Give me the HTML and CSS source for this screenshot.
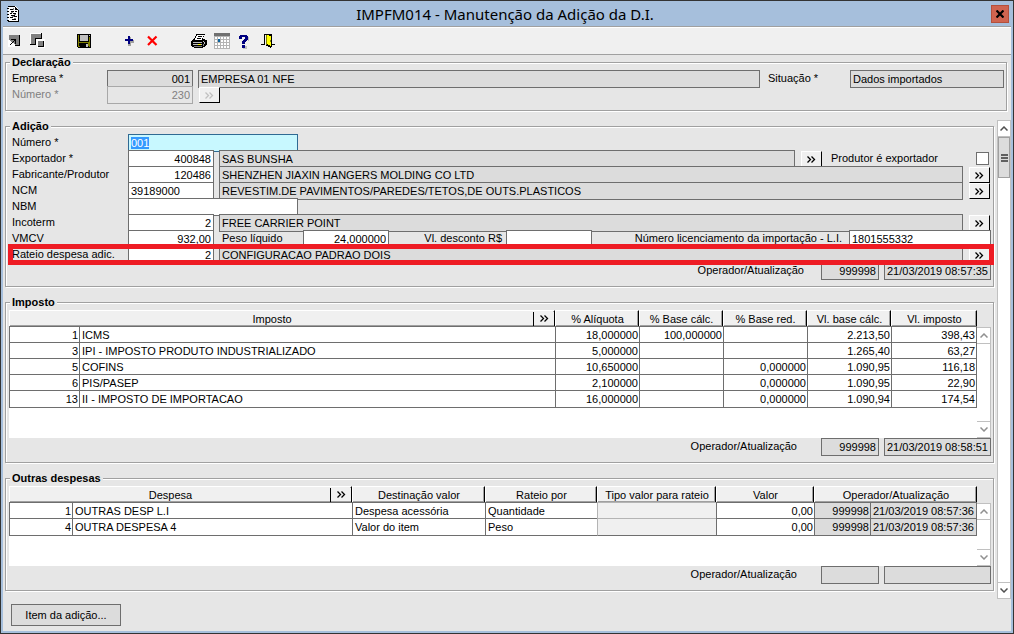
FILE: index.html
```html
<!DOCTYPE html>
<html lang="pt-BR">
<head>
    <meta charset="UTF-8">
    <meta name="viewport" content="width=device-width, initial-scale=1.0">
    <title>IMPFM014 - Manutenção da Adição da D.I.</title>
    <link rel="stylesheet" href="styles.css">
</head>
<body>

<svg class="symbols" aria-hidden="true">
    <symbol id="more" viewBox="0 0 9 7">
        <path d="M0.5 0.5L3.5 3.5L0.5 6.5M4.5 0.5L7.5 3.5L4.5 6.5" fill="none" stroke="currentColor" stroke-width="1.3"/>
    </symbol>
    <symbol id="up" viewBox="0 0 8 5">
        <path d="M0.5 4.5L4 1L7.5 4.5" fill="none" stroke="currentColor" stroke-width="1.5"/>
    </symbol>
    <symbol id="down" viewBox="0 0 8 5">
        <path d="M0.5 0.5L4 4L7.5 0.5" fill="none" stroke="currentColor" stroke-width="1.5"/>
    </symbol>
</svg>

<div class="window">
    <header class="titlebar">
        <svg class="app-icon" width="12" height="16" viewBox="0 0 12 16" shape-rendering="crispEdges">
            <path fill="#fff" d="M1 0h7l3 3v12h-10z"/>
            <path fill="#000" d="M1 0h7v1h-7zM8 1h1v1h1v1h1v1h1v12h-11v-1h10v-11h-3v-3zM0 2h2v1h-2zM0 5h2v1h-2zM0 8h2v1h-2zM0 11h2v1h-2zM0 14h2v1h-2zM3 3h3v1h-3zM4 5h3v1h-3zM8 5h2v1h-2zM3 7h2v1h-2zM6 7h3v1h-3zM4 9h4v1h-4zM7 10h3v1h-3zM3 11h3v1h-3zM5 13h4v1h-4z"/>
            <path fill="#808080" d="M6 2h1v2h-1zM4 6h2v1h-2zM7 8h2v1h-2zM5 10h2v1h-2zM7 12h2v1h-2z"/>
        </svg>
        <h1>IMPFM014 - Manutenção da Adição da D.I.</h1>
        <button class="close" aria-label="Fechar">
            <svg width="8" height="8" viewBox="0 0 8 8"><path d="M0.5 0.5L7.5 7.5M7.5 0.5L0.5 7.5" stroke="#000" stroke-width="2.2"/></svg>
        </button>
    </header>

    <nav class="toolbar">
        <button aria-label="Selecionar">
            <svg width="16" height="16" viewBox="0 0 16 16" shape-rendering="crispEdges">
                <path fill="#808080" d="M2 2h10v10h-10z"/>
                <path fill="#000" d="M12 2h1v11h-1zM8 12h5v1h-5z"/>
                <path fill="#fff" d="M1 7h2v1h1v1h1v1h2v1h1v3h-7z"/>
                <path fill="#000" d="M4 6h5v5h-1v-3h-1v1h-1v1h-1v1h-1v1h-1v-1h1v-1h1v-1h1v-1h1v-1h-3z"/>
            </svg>
        </button>
        <button aria-label="Alternar">
            <svg width="16" height="16" viewBox="0 0 16 16" shape-rendering="crispEdges">
                <path fill="#fff" d="M0 0h12v12h-12zM7 6h8v9h-8z"/>
                <path fill="#808080" d="M1 1h10v4h-5v6h-5zM8 8h5v5h-5z"/>
                <path fill="#000" d="M11 0h1v6h-1zM5 5h7v1h-7zM5 5h1v7h-1zM0 11h6v1h-6zM13 8h1v6h-1zM8 13h6v1h-6z"/>
            </svg>
        </button>
        <span class="space"></span>
        <button aria-label="Salvar">
            <svg width="16" height="16" viewBox="0 0 16 16" shape-rendering="crispEdges">
                <path fill="#000" d="M1 1h14v14h-13v-1h-1z"/>
                <path fill="#808000" d="M2 2h1v11h1v1h-2zM13 4h1v10h-1v-1h-1v-4h1zM3 9h10v1h-10z"/>
                <path fill="#c0c0c0" d="M4 2h8v6h-8zM13 2h1v1h-1zM10 11h2v3h-2z"/>
            </svg>
        </button>
        <span class="space"></span>
        <button aria-label="Incluir">
            <svg width="16" height="16" viewBox="0 0 16 16" shape-rendering="crispEdges">
                <path fill="#a0a0a0" d="M6 4h3v3h3v3h-3v3h-3z"/>
                <path fill="#000080" d="M6 3h2v3h3v2h-3v3h-2v-3h-3v-2h3z"/>
            </svg>
        </button>
        <button aria-label="Excluir">
            <svg width="16" height="16" viewBox="0 0 16 16"><path d="M3 3.5L11.5 12M11.5 3.5L3 12" stroke="#f00" stroke-width="2.2"/></svg>
        </button>
        <span class="space"></span>
        <button aria-label="Imprimir">
            <svg width="16" height="16" viewBox="0 0 16 16" shape-rendering="crispEdges">
                <path fill="#000" d="M5 1h9v1h-1v2h-1v2h2v1h2v5h-1v1h-1v1h-2v1h-9v-1h-2v-1h-1v-5h1v-1h1v-1h1v-1h1v-2h1z"/>
                <path fill="#fff" d="M6 2h7v1h-1v2h-1v2h-7v-2h1v-2h1z"/>
                <path fill="#000" d="M7 3h4v1h-4zM6 5h4v1h-4z"/>
                <path fill="#c0c0c0" d="M2 9h9v1h-9zM2 11h9v1h-9zM12 8h1v1h-1zM13 9h1v2h-1z"/>
                <path fill="#808080" d="M3 13h8v1h-8zM12 11h1v2h-1z"/>
                <path fill="#ff0" d="M7 11h3v1h-3z"/>
            </svg>
        </button>
        <button aria-label="Calendário">
            <svg width="16" height="16" viewBox="0 0 16 16" shape-rendering="crispEdges">
                <path fill="#b4b4b4" d="M0 3h16v13h-16z"/>
                <path fill="#707070" d="M0 0h16v3h-16z"/>
                <path fill="#fff" d="M1 4h2v2h-2zM4 4h2v2h-2zM7 4h2v2h-2zM10 4h2v2h-2zM13 4h2v2h-2zM1 7h2v2h-2zM7 7h2v2h-2zM10 7h2v2h-2zM13 7h2v2h-2zM1 10h2v2h-2zM4 10h2v2h-2zM7 10h2v2h-2zM10 10h2v2h-2zM13 10h2v2h-2zM1 13h2v2h-2zM4 13h2v2h-2zM7 13h2v2h-2zM10 13h2v2h-2zM13 13h2v2h-2z"/>
                <path fill="#0a64a0" d="M4 6h2v3h-2z"/>
            </svg>
        </button>
        <button aria-label="Ajuda">
            <svg width="16" height="16" viewBox="0 0 16 16" shape-rendering="crispEdges">
                <path fill="#c0c0c0" d="M6 13h4v3h-4zM11 4h1v4h-1z"/>
                <path fill="#000080" d="M3 2h7v1h1v4h-1v1h-1v1h-1v2h-3v-3h1v-1h1v-1h1v-2h-3v2h-3v-3h1zM5 12h3v3h-3z"/>
            </svg>
        </button>
        <button aria-label="Sair">
            <svg width="16" height="16" viewBox="0 0 16 16" shape-rendering="crispEdges">
                <path fill="#000" d="M4 1h8v10h3v1h-3v2h-1v1h-1v-1h-2v-1h-2v-11h-1v10h-4v-1h3z"/>
                <path fill="#ff0" d="M7 2h2v1h2v10h-1v-1h-2v-1h-1z"/>
                <path fill="#808000" d="M6 2h1v10h-1zM10 7h1v2h-1z"/>
            </svg>
        </button>
    </nav>

    <main class="content">
        <fieldset>
            <legend>Declaração</legend>
            <div class="row declaration">
                <label for="empresa">Empresa *</label>
                <input class="short num" id="empresa" value="001" readonly>
                <input class="desc" aria-label="Nome da empresa" value="EMPRESA 01 NFE" readonly>
                <label class="status-label" for="situacao">Situação *</label>
                <input class="status" id="situacao" value="Dados importados" readonly>
            </div>
            <div class="row declaration disabled">
                <label for="numero-di">Número *</label>
                <input class="short num" id="numero-di" value="230" disabled>
                <button class="more" aria-label="Buscar" disabled><svg width="9" height="7"><use href="#more"/></svg></button>
            </div>
        </fieldset>

        <div class="scroll-area">
            <div class="sections">
                <fieldset>
                    <legend>Adição</legend>
                    <div class="row">
                        <label for="numero">Número *</label>
                        <input class="medium active" id="numero" value="001">
                    </div>
                    <div class="row">
                        <label for="exportador">Exportador *</label>
                        <input class="short num" id="exportador" value="400848">
                        <input class="desc" aria-label="Nome do exportador" value="SAS BUNSHA" readonly>
                        <button class="more" aria-label="Buscar"><svg width="9" height="7"><use href="#more"/></svg></button>
                        <label class="check">Produtor é exportador <input type="checkbox"></label>
                    </div>
                    <div class="row">
                        <label for="fabricante">Fabricante/Produtor</label>
                        <input class="short num" id="fabricante" value="120486">
                        <input class="desc" aria-label="Nome do fabricante" value="SHENZHEN JIAXIN HANGERS MOLDING CO LTD" readonly>
                        <button class="more" aria-label="Buscar"><svg width="9" height="7"><use href="#more"/></svg></button>
                    </div>
                    <div class="row">
                        <label for="ncm">NCM</label>
                        <input class="short" id="ncm" value="39189000">
                        <input class="desc" aria-label="Descrição NCM" value="REVESTIM.DE PAVIMENTOS/PAREDES/TETOS,DE OUTS.PLASTICOS" readonly>
                        <button class="more" aria-label="Buscar"><svg width="9" height="7"><use href="#more"/></svg></button>
                    </div>
                    <div class="row">
                        <label for="nbm">NBM</label>
                        <input class="medium" id="nbm">
                    </div>
                    <div class="row">
                        <label for="incoterm">Incoterm</label>
                        <input class="short num" id="incoterm" value="2">
                        <input class="desc" aria-label="Descrição incoterm" value="FREE CARRIER POINT" readonly>
                        <button class="more" aria-label="Buscar"><svg width="9" height="7"><use href="#more"/></svg></button>
                    </div>
                    <div class="row">
                        <label for="vmcv">VMCV</label>
                        <input class="short num" id="vmcv" value="932,00">
                        <label class="weight" for="peso">Peso líquido</label>
                        <input class="short num" id="peso" value="24,000000">
                        <label class="discount" for="desconto">Vl. desconto R$</label>
                        <input class="short num" id="desconto">
                        <label class="license" for="licenca">Número licenciamento da importação - L.I.</label>
                        <input class="long" id="licenca" value="1801555332">
                    </div>
                    <div class="row highlight">
                        <label for="rateio">Rateio despesa adic.</label>
                        <input class="short num" id="rateio" value="2">
                        <input class="desc" aria-label="Descrição rateio" value="CONFIGURACAO PADRAO DOIS" readonly>
                        <button class="more" aria-label="Buscar"><svg width="9" height="7"><use href="#more"/></svg></button>
                    </div>
                    <div class="row update">
                        <label for="operador1">Operador/Atualização</label>
                        <input class="user num" id="operador1" value="999998" readonly>
                        <input class="date" aria-label="Atualização" value="21/03/2019 08:57:35" readonly>
                    </div>
                </fieldset>

                <fieldset>
                    <legend>Imposto</legend>
                    <div class="grid tax">
                        <div class="sheet">
                            <table>
                                <colgroup>
                                    <col class="w-code"><col>
                                    <col class="w-value"><col class="w-value"><col class="w-value"><col class="w-value"><col class="w-last">
                                </colgroup>
                                <thead>
                                    <tr>
                                        <th colspan="2"><div class="lookup"><span>Imposto</span><button class="more" aria-label="Buscar"><svg width="9" height="7"><use href="#more"/></svg></button></div></th>
                                        <th>% Alíquota</th>
                                        <th>% Base cálc.</th>
                                        <th>% Base red.</th>
                                        <th>Vl. base cálc.</th>
                                        <th>Vl. imposto</th>
                                    </tr>
                                </thead>
                                <tbody>
                                    <tr><td class="num">1</td><td>ICMS</td><td class="num">18,000000</td><td class="num">100,000000</td><td></td><td class="num">2.213,50</td><td class="num">398,43</td></tr>
                                    <tr><td class="num">3</td><td>IPI - IMPOSTO PRODUTO INDUSTRIALIZADO</td><td class="num">5,000000</td><td></td><td></td><td class="num">1.265,40</td><td class="num">63,27</td></tr>
                                    <tr><td class="num">5</td><td>COFINS</td><td class="num">10,650000</td><td></td><td class="num">0,000000</td><td class="num">1.090,95</td><td class="num">116,18</td></tr>
                                    <tr><td class="num">6</td><td>PIS/PASEP</td><td class="num">2,100000</td><td></td><td class="num">0,000000</td><td class="num">1.090,95</td><td class="num">22,90</td></tr>
                                    <tr><td class="num">13</td><td>II - IMPOSTO DE IMPORTACAO</td><td class="num">16,000000</td><td></td><td class="num">0,000000</td><td class="num">1.090,94</td><td class="num">174,54</td></tr>
                                </tbody>
                            </table>
                        </div>
                        <div class="scrollbar">
                            <button aria-label="Subir"><svg width="8" height="5"><use href="#up"/></svg></button>
                            <button aria-label="Descer"><svg width="8" height="5"><use href="#down"/></svg></button>
                        </div>
                    </div>
                    <div class="row update wide">
                        <label for="operador2">Operador/Atualização</label>
                        <input class="user num" id="operador2" value="999998" readonly>
                        <input class="date" aria-label="Atualização" value="21/03/2019 08:58:51" readonly>
                    </div>
                </fieldset>

                <fieldset>
                    <legend>Outras despesas</legend>
                    <div class="grid expense">
                        <div class="sheet">
                            <table>
                                <colgroup>
                                    <col class="w-id"><col>
                                    <col class="w-target"><col class="w-split"><col class="w-type"><col class="w-amount"><col class="w-user"><col class="w-date">
                                </colgroup>
                                <thead>
                                    <tr>
                                        <th colspan="2"><div class="lookup"><span>Despesa</span><button class="more" aria-label="Buscar"><svg width="9" height="7"><use href="#more"/></svg></button></div></th>
                                        <th>Destinação valor</th>
                                        <th>Rateio por</th>
                                        <th>Tipo valor para rateio</th>
                                        <th>Valor</th>
                                        <th colspan="2">Operador/Atualização</th>
                                    </tr>
                                </thead>
                                <tbody>
                                    <tr><td class="num">1</td><td>OUTRAS DESP L.I</td><td>Despesa acessória</td><td>Quantidade</td><td class="off"></td><td class="num">0,00</td><td class="num locked">999998</td><td class="locked">21/03/2019 08:57:36</td></tr>
                                    <tr><td class="num">4</td><td>OUTRA DESPESA 4</td><td>Valor do item</td><td>Peso</td><td class="off"></td><td class="num">0,00</td><td class="num locked">999998</td><td class="locked">21/03/2019 08:57:36</td></tr>
                                </tbody>
                            </table>
                        </div>
                        <div class="scrollbar">
                            <button aria-label="Subir"><svg width="8" height="5"><use href="#up"/></svg></button>
                            <button aria-label="Descer"><svg width="8" height="5"><use href="#down"/></svg></button>
                        </div>
                    </div>
                    <div class="row update wide">
                        <label for="operador3">Operador/Atualização</label>
                        <input class="user num" id="operador3" readonly>
                        <input class="date" aria-label="Atualização" readonly>
                    </div>
                </fieldset>
            </div>

            <div class="scrollbar main">
                <button aria-label="Subir"><svg width="8" height="5"><use href="#up"/></svg></button>
                <div class="thumb"><span></span><span></span><span></span></div>
                <button aria-label="Descer"><svg width="8" height="5"><use href="#down"/></svg></button>
            </div>
        </div>

        <button class="item">Item da adição...</button>
    </main>
</div>

<script>
    const numero = document.getElementById('numero');
    numero.focus();
    numero.select();
</script>

</body>
</html>
```

FILE: styles.css
```css
*, *::after {
    box-sizing: border-box;
}
body {
    margin: 0;
    font-family: "Liberation Sans", Arial, sans-serif;
    font-size: 11px;
    color: #000;
}
button, input {
    font: inherit;
    color: inherit;
    border-radius: 0;
    margin: 0;
}
button {
    padding: 0;
}
.symbols {
    display: none;
}
.window {
    display: flex;
    flex-direction: column;
    min-height: 100vh;
    border: 1px solid #333;
    background-color: #e6e6e6;
    box-shadow: inset 2px 0 #a6bfdc, inset -2px 0 #a6bfdc, inset 0 -2px #a6bfdc;
}

/* Title bar and toolbar */
.titlebar {
    display: flex;
    align-items: center;
    height: 25px;
    padding: 0 4px 0 6px;
    background-color: #a6bfdc;
}
.titlebar h1 {
    flex: 1;
    margin: 0;
    text-align: center;
    font-family: "Noto Sans", "Open Sans", sans-serif;
    font-size: 15px;
    font-weight: normal;
    line-height: 24px;
}
.close {
    display: flex;
    align-items: center;
    justify-content: center;
    width: 18px;
    height: 18px;
    border: 1px solid #b4503c;
    background-color: #cf6450;
}
.toolbar {
    display: flex;
    align-items: center;
    height: 29px;
    margin: 0 2px;
    padding-left: 4px;
    border-top: 1px solid #a0a0a0;
    border-bottom: 1px solid #a0a0a0;
    box-shadow: inset 0 1px #fff;
    background-color: #f0f0f0;
}
.toolbar button, .space {
    width: 23px;
    height: 16px;
    border: none;
    background: none;
    text-align: left;
}
.toolbar svg {
    display: block;
}

/* Groups */
.content {
    flex: 1;
    padding: 0 2px 7px 4px;
}
.content > fieldset {
    margin-right: 4px;
}
fieldset {
    min-width: 0;
    margin: 0 0 8px;
    padding: 0 2px 8px 3px;
    border: 1px solid #a0a0a0;
    box-shadow: 1px 1px #fff, inset 1px 1px #fff;
}
legend {
    height: 15px;
    margin-left: 1px;
    padding: 0 2px;
    font-weight: bold;
    line-height: 15px;
    background-color: #e6e6e6;
}

/* Form rows, each field overlaps the row below */
.row {
    display: flex;
    align-items: flex-start;
    height: 16px;
    padding-left: 3px;
}
.row label {
    flex: none;
    width: 116px;
    line-height: 16px;
    white-space: nowrap;
}
.row input {
    flex: none;
    height: 18px;
    padding: 0 2px 1px;
    border: 1px solid #6e6e6e;
    background-color: #fff;
    outline: none;
}
.row input:read-only {
    background-color: #dcdcdc;
}
.num {
    text-align: right;
}
.row .short {
    width: 86px;
}
.row .medium {
    width: 170px;
}
.row .long {
    width: 142px;
}
.row .desc {
    flex: 1;
    min-width: 0;
    margin-left: 5px;
}
.row .active {
    border-color: #2f6a93;
    background-color: #c8f8ff;
}
.active::selection {
    color: #fff;
    background-color: #3399ff;
}
.declaration label {
    width: 95px;
}
.row .status-label {
    width: 90px;
    padding-left: 8px;
}
.row .status {
    width: 154px;
}
.disabled label, .disabled input {
    color: #808080;
}
.row.disabled input {
    border-color: #a8a8a8;
    background-color: #e6e6e6;
}
.row .check {
    display: flex;
    justify-content: space-between;
    width: 168px;
    padding: 0 2px 0 8px;
}
.row .check input {
    appearance: none;
    width: 13px;
    height: 13px;
    margin-top: 2px;
    background-color: #fff;
}
.row .weight {
    width: 89px;
    padding-left: 8px;
}
.row .discount {
    width: 117px;
    padding-right: 4px;
    text-align: right;
}
.row .license {
    flex: 1;
    padding-right: 7px;
    text-align: right;
}
.more {
    display: flex;
    flex: none;
    align-items: center;
    justify-content: center;
    width: 21px;
    height: 16px;
    margin: 1px 1px 0 6px;
    border: 1px solid #000;
    border-top-color: #fff;
    border-left-color: #fff;
    background-color: #f0f0f0;
}
.more:disabled {
    color: #c0c0c0;
}
.highlight {
    position: relative;
}
.highlight::after {
    content: "";
    position: absolute;
    top: -2px;
    left: -1px;
    right: -3px;
    height: 21px;
    border: 5px solid #ee1c24;
}
.update {
    justify-content: flex-end;
}
.row.update label {
    width: auto;
    padding-right: 17px;
}
.row.wide label {
    padding-right: 24px;
}
.row .user {
    width: 58px;
}
.row .date {
    width: 107px;
    margin-left: 5px;
}

/* Grids */
.grid {
    display: flex;
}
.tax {
    height: 128px;
}
.expense {
    height: 80px;
}
.sheet {
    flex: 1;
    background-color: #fff;
}
table {
    width: 100%;
    table-layout: fixed;
    border-spacing: 0;
}
th {
    height: 16px;
    padding: 1px 0 0 1px;
    border-top: 1px solid #fff;
    border-left: 1px solid #fff;
    border-right: 1px solid #000;
    background-color: #f0f0f0;
    box-shadow: inset -1px -1px #a0a0a0;
    font-weight: normal;
    line-height: 14px;
}
.lookup {
    display: flex;
    height: 14px;
}
.lookup span {
    flex: 1;
    border-right: 1px solid #000;
}
.lookup .more {
    width: 20px;
    height: 13px;
    margin: 0;
    border: none;
}
td {
    height: 16px;
    padding: 1px 1px 0 2px;
    border-top: 1px solid #6e6e6e;
    border-left: 1px solid #6e6e6e;
    line-height: 14px;
    white-space: nowrap;
}
td:last-child {
    border-right: 1px solid #6e6e6e;
}
tr:last-child td {
    height: 18px;
    padding-bottom: 1px;
    border-bottom: 1px solid #6e6e6e;
}
.locked {
    background-color: #dcdcdc;
}
.off {
    border-color: #b4b4b4;
    background-color: #f0f0f0;
}
.w-code {
    width: 70px;
}
.w-value {
    width: 84px;
}
.w-last {
    width: 86px;
}
.w-id {
    width: 63px;
}
.w-target {
    width: 133px;
}
.w-split {
    width: 112px;
}
.w-type {
    width: 119px;
}
.w-amount {
    width: 98px;
}
.w-user {
    width: 56px;
}
.w-date {
    width: 107px;
}

/* Scroll bars */
.scrollbar {
    display: flex;
    flex: none;
    flex-direction: column;
    justify-content: space-between;
    width: 14px;
    margin-top: 17px;
    border: 1px solid #c0c0c0;
    border-left: none;
    background-color: #fff;
    color: #909090;
}
.scrollbar button {
    display: flex;
    align-items: center;
    justify-content: center;
    height: 16px;
    border: none;
    border-bottom: 1px solid #c0c0c0;
    background-color: #fff;
}
.scrollbar button:last-child {
    border-top: 1px solid #c0c0c0;
    border-bottom: none;
}
.scroll-area {
    display: flex;
    gap: 3px;
}
.sections {
    flex: 1;
    min-width: 0;
}
.scrollbar.main {
    justify-content: flex-start;
    margin-top: 1px;
    border-left: 1px solid #c0c0c0;
    color: #505050;
}
.main button:last-child {
    margin-top: auto;
}
.thumb {
    display: flex;
    flex-direction: column;
    align-items: center;
    justify-content: center;
    gap: 1px;
    height: 41px;
    border: 1px solid #a0a0a0;
    background-color: #dcdcdc;
}
.thumb span {
    width: 7px;
    height: 2px;
    background-color: #606060;
}
.item {
    display: block;
    width: 110px;
    height: 22px;
    margin: 5px 0 0 6px;
    border: 1px solid #6e6e6e;
    background-color: #dcdcdc;
}
```
